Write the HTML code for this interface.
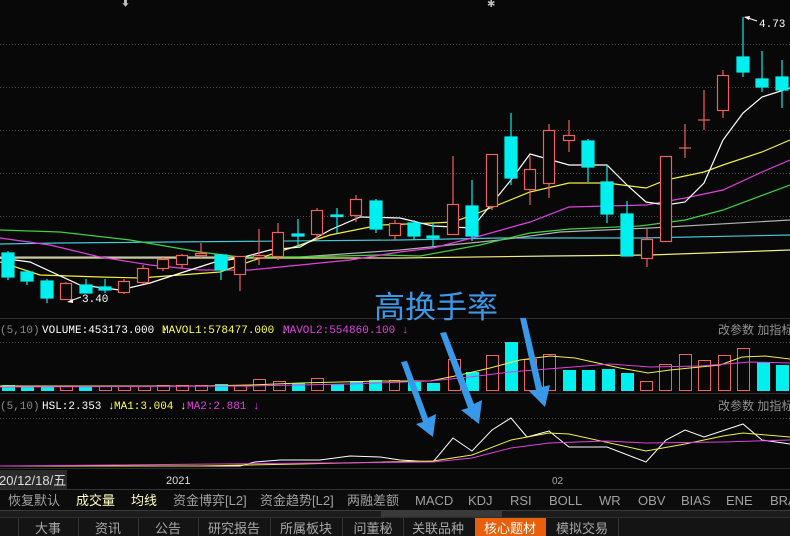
<!DOCTYPE html>
<html><head><meta charset="utf-8"><style>
html,body{margin:0;padding:0;background:#080808;width:790px;height:536px;overflow:hidden;font-family:"Liberation Sans","Noto Sans CJK SC",sans-serif}
svg{position:absolute;left:0;top:0}
.t{font-family:"Liberation Mono","Noto Sans CJK SC",monospace;font-size:11px}
.c{font-family:"Liberation Sans","Noto Sans CJK SC",sans-serif}
</style></head><body>
<svg width="790" height="536" viewBox="0 0 790 536" xmlns="http://www.w3.org/2000/svg">
<rect width="790" height="536" fill="#080808"/>
<g stroke="#4a4a4a" stroke-dasharray="1,2" stroke-width="1">
<line x1="0" y1="44.5" x2="790" y2="44.5"/><line x1="0" y1="87.5" x2="790" y2="87.5"/><line x1="0" y1="130.5" x2="790" y2="130.5"/><line x1="0" y1="173.5" x2="790" y2="173.5"/><line x1="0" y1="216.5" x2="790" y2="216.5"/>
<line x1="0" y1="342.5" x2="790" y2="342.5"/><line x1="0" y1="418.5" x2="790" y2="418.5"/>
</g>
<g stroke="#2e2e2e"><line x1="0" y1="318.5" x2="790" y2="318.5"/><line x1="0" y1="393.5" x2="790" y2="393.5"/><line x1="0" y1="468.5" x2="790" y2="468.5"/></g>
<text x="121" y="6" fill="#bbb" font-size="9">⬇</text><text x="487" y="7" fill="#bbb" font-size="10">✱</text>
<g fill="none" stroke-width="1.2">
<polyline stroke="#f0f080" points="0,258 300,258 400,258 550,256 650,255 790,250"/>
<polyline stroke="#40c8d8" points="0,244 60,243 400,240 500,238 640,238 790,235"/>
<polyline stroke="#b0b0b0" points="0,257 300,257 400,250 450,245 500,240 560,232 650,228 790,220"/>
<polyline stroke="#40d040" points="0,230 60,232 130,240 200,252 240,257 300,257 380,255 420,256 480,245 530,233 570,229 640,226 685,220 723,210 790,185"/>
<polyline stroke="#e040e0" points="0,238 50,245 100,257 150,265 200,270 250,270 300,265 350,260 400,252 433,248 480,236 530,222 569,207 646,205 685,198 723,190 762,172 790,160"/>
<polyline stroke="#f0f040" points="0,262 40,275 100,277 140,278 180,275 220,272 260,258 300,245 330,235 380,225 433,223 453,222 473,215 530,192 569,183 607,183 646,188 666,180 704,172 723,165 762,152 790,140"/>
<polyline stroke="#ffffff" points="0,258 30,262 80,285 120,290 150,283 190,270 215,262 240,258 270,250 300,247 330,230 360,217 400,218 433,226 472,228 511,180 530,154 569,165 607,165 627,185 646,202 666,205 685,202 704,183 723,140 743,113 762,97 790,88"/>
</g>
<g stroke-width="1.2">
<g stroke="#00f0f0" fill="#00f0f0">
<line x1="8" y1="251" x2="8" y2="280"/><rect x="2" y="253" width="12" height="24"/>
<line x1="27" y1="270" x2="27" y2="285"/><rect x="21" y="272" width="12" height="9"/>
<line x1="47" y1="279" x2="47" y2="303"/><rect x="41" y="281" width="12" height="17"/>
<line x1="86" y1="279" x2="86" y2="293"/><rect x="80" y="285" width="12" height="8"/>
<line x1="105" y1="279" x2="105" y2="293"/><rect x="99" y="287" width="12" height="3"/>
<line x1="221" y1="254" x2="221" y2="280"/><rect x="215" y="255" width="12" height="15"/>
<line x1="298" y1="219" x2="298" y2="247"/><rect x="292" y="234" width="12" height="2"/>
<line x1="337" y1="208" x2="337" y2="233"/><rect x="331" y="215" width="12" height="1.5"/>
<line x1="376" y1="199" x2="376" y2="233"/><rect x="370" y="201" width="12" height="28"/>
<line x1="414" y1="220" x2="414" y2="240"/><rect x="408" y="223" width="12" height="13"/>
<line x1="433" y1="223" x2="433" y2="247"/><rect x="427" y="236" width="12" height="2"/>
<line x1="472" y1="180" x2="472" y2="241"/><rect x="466" y="206" width="12" height="30"/>
<line x1="511" y1="113" x2="511" y2="185"/><rect x="505" y="137" width="12" height="41"/>
<line x1="588" y1="139" x2="588" y2="182"/><rect x="582" y="141" width="12" height="26"/>
<line x1="607" y1="165" x2="607" y2="223"/><rect x="601" y="182" width="12" height="32"/>
<line x1="627" y1="201" x2="627" y2="256"/><rect x="621" y="214" width="12" height="42"/>
<line x1="743" y1="17" x2="743" y2="77"/><rect x="737" y="57" width="12" height="15"/>
<line x1="762" y1="51" x2="762" y2="92"/><rect x="756" y="79" width="12" height="8"/>
<line x1="782" y1="60" x2="782" y2="108"/><rect x="776" y="77" width="12" height="13"/>
</g>
<g stroke="#f06060" fill="#080808">
<line x1="66" y1="282" x2="66" y2="300"/><rect x="60.5" y="283.5" width="11" height="16"/>
<line x1="124" y1="279" x2="124" y2="294"/><rect x="118.5" y="281.5" width="11" height="11"/>
<line x1="143" y1="265" x2="143" y2="284"/><rect x="137.5" y="268.5" width="11" height="14"/>
<line x1="163" y1="256" x2="163" y2="271"/><rect x="157.5" y="259.5" width="11" height="9"/>
<line x1="182" y1="254" x2="182" y2="268"/><rect x="176.5" y="255.5" width="11" height="9"/>
<line x1="201" y1="243" x2="201" y2="258"/><rect x="195.5" y="253.5" width="11" height="2"/>
<line x1="240" y1="256" x2="240" y2="291"/><rect x="234.5" y="256.5" width="11" height="18"/>
<line x1="259" y1="229" x2="259" y2="265"/><rect x="253.5" y="255.5" width="11" height="2"/>
<line x1="278" y1="223" x2="278" y2="260"/><rect x="272.5" y="232.5" width="11" height="24"/>
<line x1="317" y1="208" x2="317" y2="240"/><rect x="311.5" y="210.5" width="11" height="24"/>
<line x1="356" y1="195" x2="356" y2="222"/><rect x="350.5" y="199.5" width="11" height="16"/>
<line x1="395" y1="220" x2="395" y2="240"/><rect x="389.5" y="223.5" width="11" height="12"/>
<line x1="453" y1="156" x2="453" y2="235"/><rect x="447.5" y="204.5" width="11" height="30"/>
<line x1="492" y1="154" x2="492" y2="210"/><rect x="486.5" y="154.5" width="11" height="52"/>
<line x1="530" y1="156" x2="530" y2="205"/><rect x="524.5" y="169.5" width="11" height="20"/>
<line x1="549" y1="124" x2="549" y2="198"/><rect x="543.5" y="130.5" width="11" height="53"/>
<line x1="569" y1="120" x2="569" y2="152"/><rect x="563.5" y="135.5" width="11" height="5"/>
<line x1="647" y1="229" x2="647" y2="267"/><rect x="641.5" y="239.5" width="11" height="19"/>
<line x1="666" y1="156" x2="666" y2="242"/><rect x="660.5" y="156.5" width="11" height="85"/>
<line x1="685" y1="124" x2="685" y2="158"/><line x1="679" y1="148" x2="691" y2="148"/>
<line x1="704" y1="90" x2="704" y2="130"/><line x1="698" y1="120" x2="710" y2="120"/>
<line x1="723" y1="70" x2="723" y2="118"/><rect x="717.5" y="75.5" width="11" height="35"/>
</g>
</g>
<text x="759" y="27" fill="#fff" class="t">4.73</text>
<polyline points="745,17 757,21" stroke="#fff" fill="none"/><polygon points="744,17 750,16 749,20" fill="#fff"/>
<text x="82" y="302" fill="#fff" class="t">3.40</text>
<polyline points="70,301 81,297" stroke="#fff" fill="none"/><polygon points="67,302 73,299 73,303" fill="#fff"/>
<text x="0" y="333" class="t" fill="#888">(5,10)</text>
<text x="42" y="333" class="t" fill="#fff">VOLUME:453173.000 ↓</text>
<text x="162" y="333" class="t" fill="#ffff40">MAVOL1:578477.000 ↓</text>
<text x="283" y="333" class="t" fill="#e040e0">MAVOL2:554860.100 ↓</text>
<text x="718" y="334" class="c" font-size="12" fill="#909090">改参数  加指标</text>
<g fill="#00f0f0">
<rect x="2" y="385" width="13" height="6"/><rect x="21" y="386" width="13" height="5"/><rect x="41" y="386" width="13" height="5"/><rect x="79" y="386" width="13" height="5"/><rect x="215" y="384" width="13" height="7"/><rect x="292" y="383" width="13" height="8"/><rect x="331" y="384" width="13" height="7"/><rect x="350" y="381" width="13" height="10"/><rect x="369" y="380" width="13" height="11"/>
<rect x="408" y="382" width="13" height="9"/><rect x="427" y="383" width="13" height="8"/><rect x="466" y="372" width="13" height="19"/><rect x="505" y="342" width="13" height="49"/><rect x="563" y="370" width="13" height="21"/><rect x="582" y="370" width="13" height="21"/><rect x="602" y="369" width="13" height="22"/><rect x="621" y="373" width="13" height="18"/><rect x="757" y="362" width="13" height="29"/><rect x="776" y="365" width="13" height="26"/>
</g>
<g fill="none" stroke="#f06060">
<rect x="60.5" y="386.5" width="12" height="4"/><rect x="99.5" y="386.5" width="12" height="4"/><rect x="118.5" y="386.5" width="12" height="4"/><rect x="138.5" y="386.5" width="12" height="4"/><rect x="157.5" y="385.5" width="12" height="5"/><rect x="176.5" y="385.5" width="12" height="5"/><rect x="195.5" y="385.5" width="12" height="5"/><rect x="234.5" y="385.5" width="12" height="5"/><rect x="253.5" y="379.5" width="12" height="11"/><rect x="273.5" y="381.5" width="12" height="9"/><rect x="311.5" y="378.5" width="12" height="12"/><rect x="389.5" y="380.5" width="10" height="10"/>
<rect x="448.5" y="359.5" width="12" height="31"/><rect x="486.5" y="355.5" width="12" height="35"/><rect x="524.5" y="359.5" width="12" height="31"/><rect x="543.5" y="354.5" width="12" height="36"/><rect x="640.5" y="381.5" width="12" height="9"/><rect x="659.5" y="364.5" width="12" height="26"/><rect x="679.5" y="354.5" width="12" height="36"/><rect x="698.5" y="360.5" width="12" height="30"/><rect x="718.5" y="355.5" width="12" height="35"/><rect x="737.5" y="348.5" width="12" height="42"/>
</g>
<polyline fill="none" stroke="#f0f040" points="0,386 200,386 250,385 300,383 380,381 430,381 460,375 490,368 520,360 550,356 575,358 620,368 648,373 670,370 720,365 742,357 765,356 790,359"/>
<polyline fill="none" stroke="#e040e0" points="0,387 250,386 350,384 430,381 470,377 510,372 560,368 610,364 650,367 700,366 750,362 790,363"/>
<text x="0" y="409" class="t" fill="#888">(5,10)</text>
<text x="42" y="409" class="t" fill="#fff">HSL:2.353 ↓</text>
<text x="114" y="409" class="t" fill="#ffff40">MA1:3.004 ↓</text>
<text x="187" y="409" class="t" fill="#e040e0">MA2:2.881 ↓</text>
<text x="718" y="410" class="c" font-size="12" fill="#909090">改参数  加指标</text>
<polyline fill="none" stroke="#fff" points="0,466 240,466 255,462 280,460 320,460 350,456 380,457 400,460 433,462 453,438 472,451 492,430 511,418 527,437 549,431 569,447 607,447 646,462 666,440 685,430 704,437 743,424 762,440 790,444"/>
<polyline fill="none" stroke="#f0f040" points="0,466 200,466 300,464 433,461 472,455 511,440 549,433 569,434 646,451 685,444 723,436 743,433 790,437"/>
<polyline fill="none" stroke="#e040e0" points="0,466 433,462 472,458 511,448 549,443 607,441 646,443 723,442 790,440"/>
<text x="374" y="318" fill="#3a98e8" font-size="31" class="c">高换手率</text>
<g fill="#3a98e8">
<polygon points="401,362 407,361 428,418 436,414 433,437 416,424 423,422"/>
<polygon points="440,333 446,332 474,404 482,400 479,424 461,410 468,408"/>
<polygon points="520,318 526,318 542,387 550,385 545,407 529,391 536,390"/>
</g>
<rect x="0" y="470" width="67" height="19" fill="#2a2a2a"/>
<text x="-1" y="485" fill="#ddd" font-size="13" class="c">20/12/18/五</text>
<text x="166" y="484" fill="#ddd" font-size="11" class="c">2021</text>
<text x="552" y="484" fill="#aaa" font-size="10" class="c">02</text>
<rect x="0" y="489" width="790" height="1" fill="#333"/>
<rect x="0" y="490" width="790" height="20" fill="#0c0c0c"/>
<rect x="0" y="510" width="790" height="1" fill="#3a3a3a"/>
<rect x="0" y="511" width="790" height="6" fill="#1c1c1c"/>
<rect x="381" y="511" width="121" height="6" fill="#3a3a3a"/>
<g font-size="13" class="c" fill="#a0a0a0">
<text x="8" y="505">恢复默认</text>
<text x="76" y="505" fill="#ffffc0">成交量</text>
<text x="131" y="505" fill="#ffffc0">均线</text>
<text x="173" y="505">资金博弈[L2]</text>
<text x="260" y="505">资金趋势[L2]</text>
<text x="347" y="505">两融差额</text>
<text x="415" y="505">MACD</text><text x="468" y="505">KDJ</text><text x="510" y="505">RSI</text><text x="549" y="505">BOLL</text><text x="599" y="505">WR</text><text x="638" y="505">OBV</text><text x="681" y="505">BIAS</text><text x="726" y="505">ENE</text><text x="770" y="505">BRA</text>
</g>
<rect x="0" y="517" width="790" height="19" fill="#141414"/>
<rect x="0" y="517" width="790" height="1" fill="#2e2e2e"/>
<rect x="475" y="518" width="71" height="18" fill="#e85f0c"/>
<g fill="#333"><rect x="18" y="518" width="1" height="18"/><rect x="78" y="518" width="1" height="18"/><rect x="138" y="518" width="1" height="18"/><rect x="198" y="518" width="1" height="18"/><rect x="270" y="518" width="1" height="18"/><rect x="342" y="518" width="1" height="18"/><rect x="403" y="518" width="1" height="18"/><rect x="618" y="518" width="1" height="18"/></g>
<g font-size="13" class="c" fill="#a8a8a8" text-anchor="middle">
<text x="48" y="533">大事</text><text x="108" y="533">资讯</text><text x="168" y="533">公告</text><text x="234" y="533">研究报告</text><text x="306" y="533">所属板块</text><text x="373" y="533">问董秘</text><text x="438" y="533">关联品种</text><text x="510" y="533" fill="#fff">核心题材</text><text x="582" y="533">模拟交易</text>
</g>
</svg>
</body></html>
